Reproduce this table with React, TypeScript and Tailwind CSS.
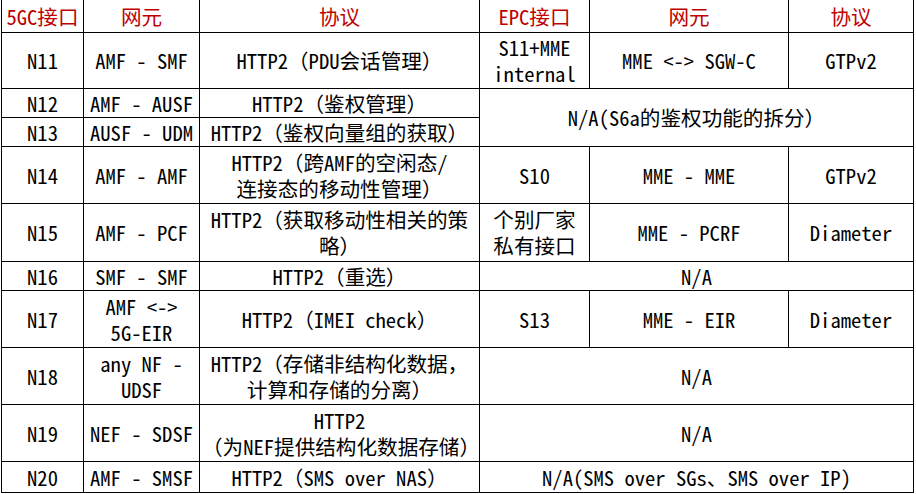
const cell = 'border border-black text-center align-middle px-0.5 whitespace-nowrap';
const head = 'border border-black border-t-0 text-center align-middle text-[#c00000] whitespace-nowrap';

type Row = {
  id: string;
  ne: React.ReactNode;
  proto: React.ReactNode;
  h: string;
  epc?: [React.ReactNode, React.ReactNode, React.ReactNode];
  na?: React.ReactNode;
  naRows?: number;
  skip?: boolean;
};

const rows: Row[] = [
  { id: 'N11', ne: 'AMF - SMF', proto: 'HTTP2（PDU会话管理）', h: 'h-[56px]', epc: [<>S11+MME<br />internal</>, 'MME <-> SGW-C', 'GTPv2'] },
  { id: 'N12', ne: 'AMF - AUSF', proto: 'HTTP2（鉴权管理）', h: 'h-[29px]', na: 'N/A(S6a的鉴权功能的拆分）', naRows: 2 },
  { id: 'N13', ne: 'AUSF - UDM', proto: 'HTTP2（鉴权向量组的获取）', h: 'h-[29px]', skip: true },
  { id: 'N14', ne: 'AMF - AMF', proto: <>HTTP2（跨AMF的空闲态/<br />连接态的移动性管理）</>, h: 'h-[57px]', epc: ['S10', 'MME - MME', 'GTPv2'] },
  { id: 'N15', ne: 'AMF - PCF', proto: <>HTTP2（获取移动性相关的策<br />略）</>, h: 'h-[58px]', epc: [<>个别厂家<br />私有接口</>, 'MME - PCRF', 'Diameter'] },
  { id: 'N16', ne: 'SMF - SMF', proto: 'HTTP2（重选）', h: 'h-[29px]', na: 'N/A' },
  { id: 'N17', ne: <>AMF &lt;-&gt;<br />5G-EIR</>, proto: 'HTTP2（IMEI check）', h: 'h-[57px]', epc: ['S13', 'MME - EIR', 'Diameter'] },
  { id: 'N18', ne: <>any NF -<br />UDSF</>, proto: <>HTTP2（存储非结构化数据，<br />计算和存储的分离）</>, h: 'h-[57px]', na: 'N/A' },
  { id: 'N19', ne: 'NEF - SDSF', proto: <>HTTP2<br />（为NEF提供结构化数据存储）</>, h: 'h-[57px]', na: 'N/A' },
  { id: 'N20', ne: 'AMF - SMSF', proto: 'HTTP2（SMS over NAS）', h: 'h-[31px]', na: 'N/A(SMS over SGs、SMS over IP)' },
];

export default function App() {
  return (
    <div className="w-[916px] h-[494px] bg-white overflow-hidden pl-px">
      <table
        className="table-fixed border-collapse text-black text-[20.6px] leading-[26px] font-['Noto_Sans_Mono_CJK_SC','Noto_Sans_CJK_SC',monospace]"
        style={{ width: 912 }}
      >
        <colgroup>
          <col className="w-[82px]" />
          <col className="w-[116px]" />
          <col className="w-[280px]" />
          <col className="w-[110px]" />
          <col className="w-[199px]" />
          <col className="w-[125px]" />
        </colgroup>
        <tbody>
          <tr className="h-[32px]">
            <td className={head}>5GC接口</td>
            <td className={head}>网元</td>
            <td className={head}>协议</td>
            <td className={head}>EPC接口</td>
            <td className={head}>网元</td>
            <td className={head}>协议</td>
          </tr>
          {rows.map((r) => (
            <tr key={r.id} className={r.h}>
              <td className={cell}>{r.id}</td>
              <td className={cell}>{r.ne}</td>
              <td className={cell}>{r.proto}</td>
              {r.epc && (
                <>
                  <td className={cell}>{r.epc[0]}</td>
                  <td className={cell}>{r.epc[1]}</td>
                  <td className={cell}>{r.epc[2]}</td>
                </>
              )}
              {r.na && (
                <td className={cell} colSpan={3} rowSpan={r.naRows ?? 1}>
                  {r.na}
                </td>
              )}
            </tr>
          ))}
        </tbody>
      </table>
    </div>
  );
}
